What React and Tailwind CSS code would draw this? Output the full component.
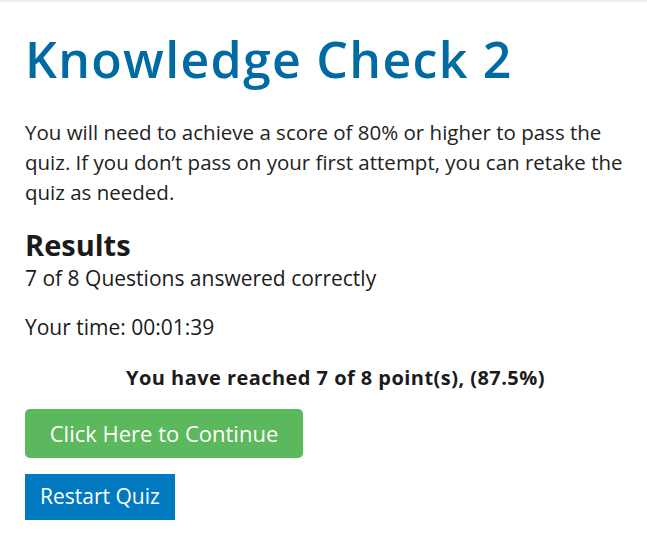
export default function App() {
  return (
    <div className="min-h-screen bg-white" style={{ fontFamily: '"Open Sans", sans-serif' }}>
      <div className="h-[3px] bg-gradient-to-b from-[#e6e6e6] to-white" />
      <div className="pl-[25px] pr-[1px] pt-[26px]">
        <h1 className="text-[50px] leading-[60px] font-semibold tracking-[1.3px] text-[#006aa3]">
          Knowledge Check 2
        </h1>
        <p className="mt-[28px] text-[20.5px] leading-[30px] text-[#222]">
          You will need to achieve a score of 80% or higher to pass the quiz. If you don’t pass on your first attempt, you can retake the quiz as needed.
        </p>
        <div className="mt-[21px] text-[#1b1b1b]">
          <h2 className="text-[29px] leading-[34px] font-bold">Results</h2>
          <p className="mt-[2px] text-[21px] leading-[28px]">7 of 8 Questions answered correctly</p>
          <p className="mt-[21px] text-[21px] leading-[28px]">Your time: 00:01:39</p>
          <p className="mt-[23px] text-center text-[20px] leading-[28px] font-bold tracking-[0.45px]">
            You have reached 7 of 8 point(s), (87.5%)
          </p>
        </div>
        <div className="mt-[17px] flex flex-col items-start gap-[16px]">
          <button className="h-[49px] w-[278px] rounded-[5px] bg-[#5cb85c] text-[22px] text-white">
            Click Here to Continue
          </button>
          <button className="h-[46px] w-[150px] bg-[#0079c0] text-[21px] text-white">
            Restart Quiz
          </button>
        </div>
      </div>
    </div>
  )
}
